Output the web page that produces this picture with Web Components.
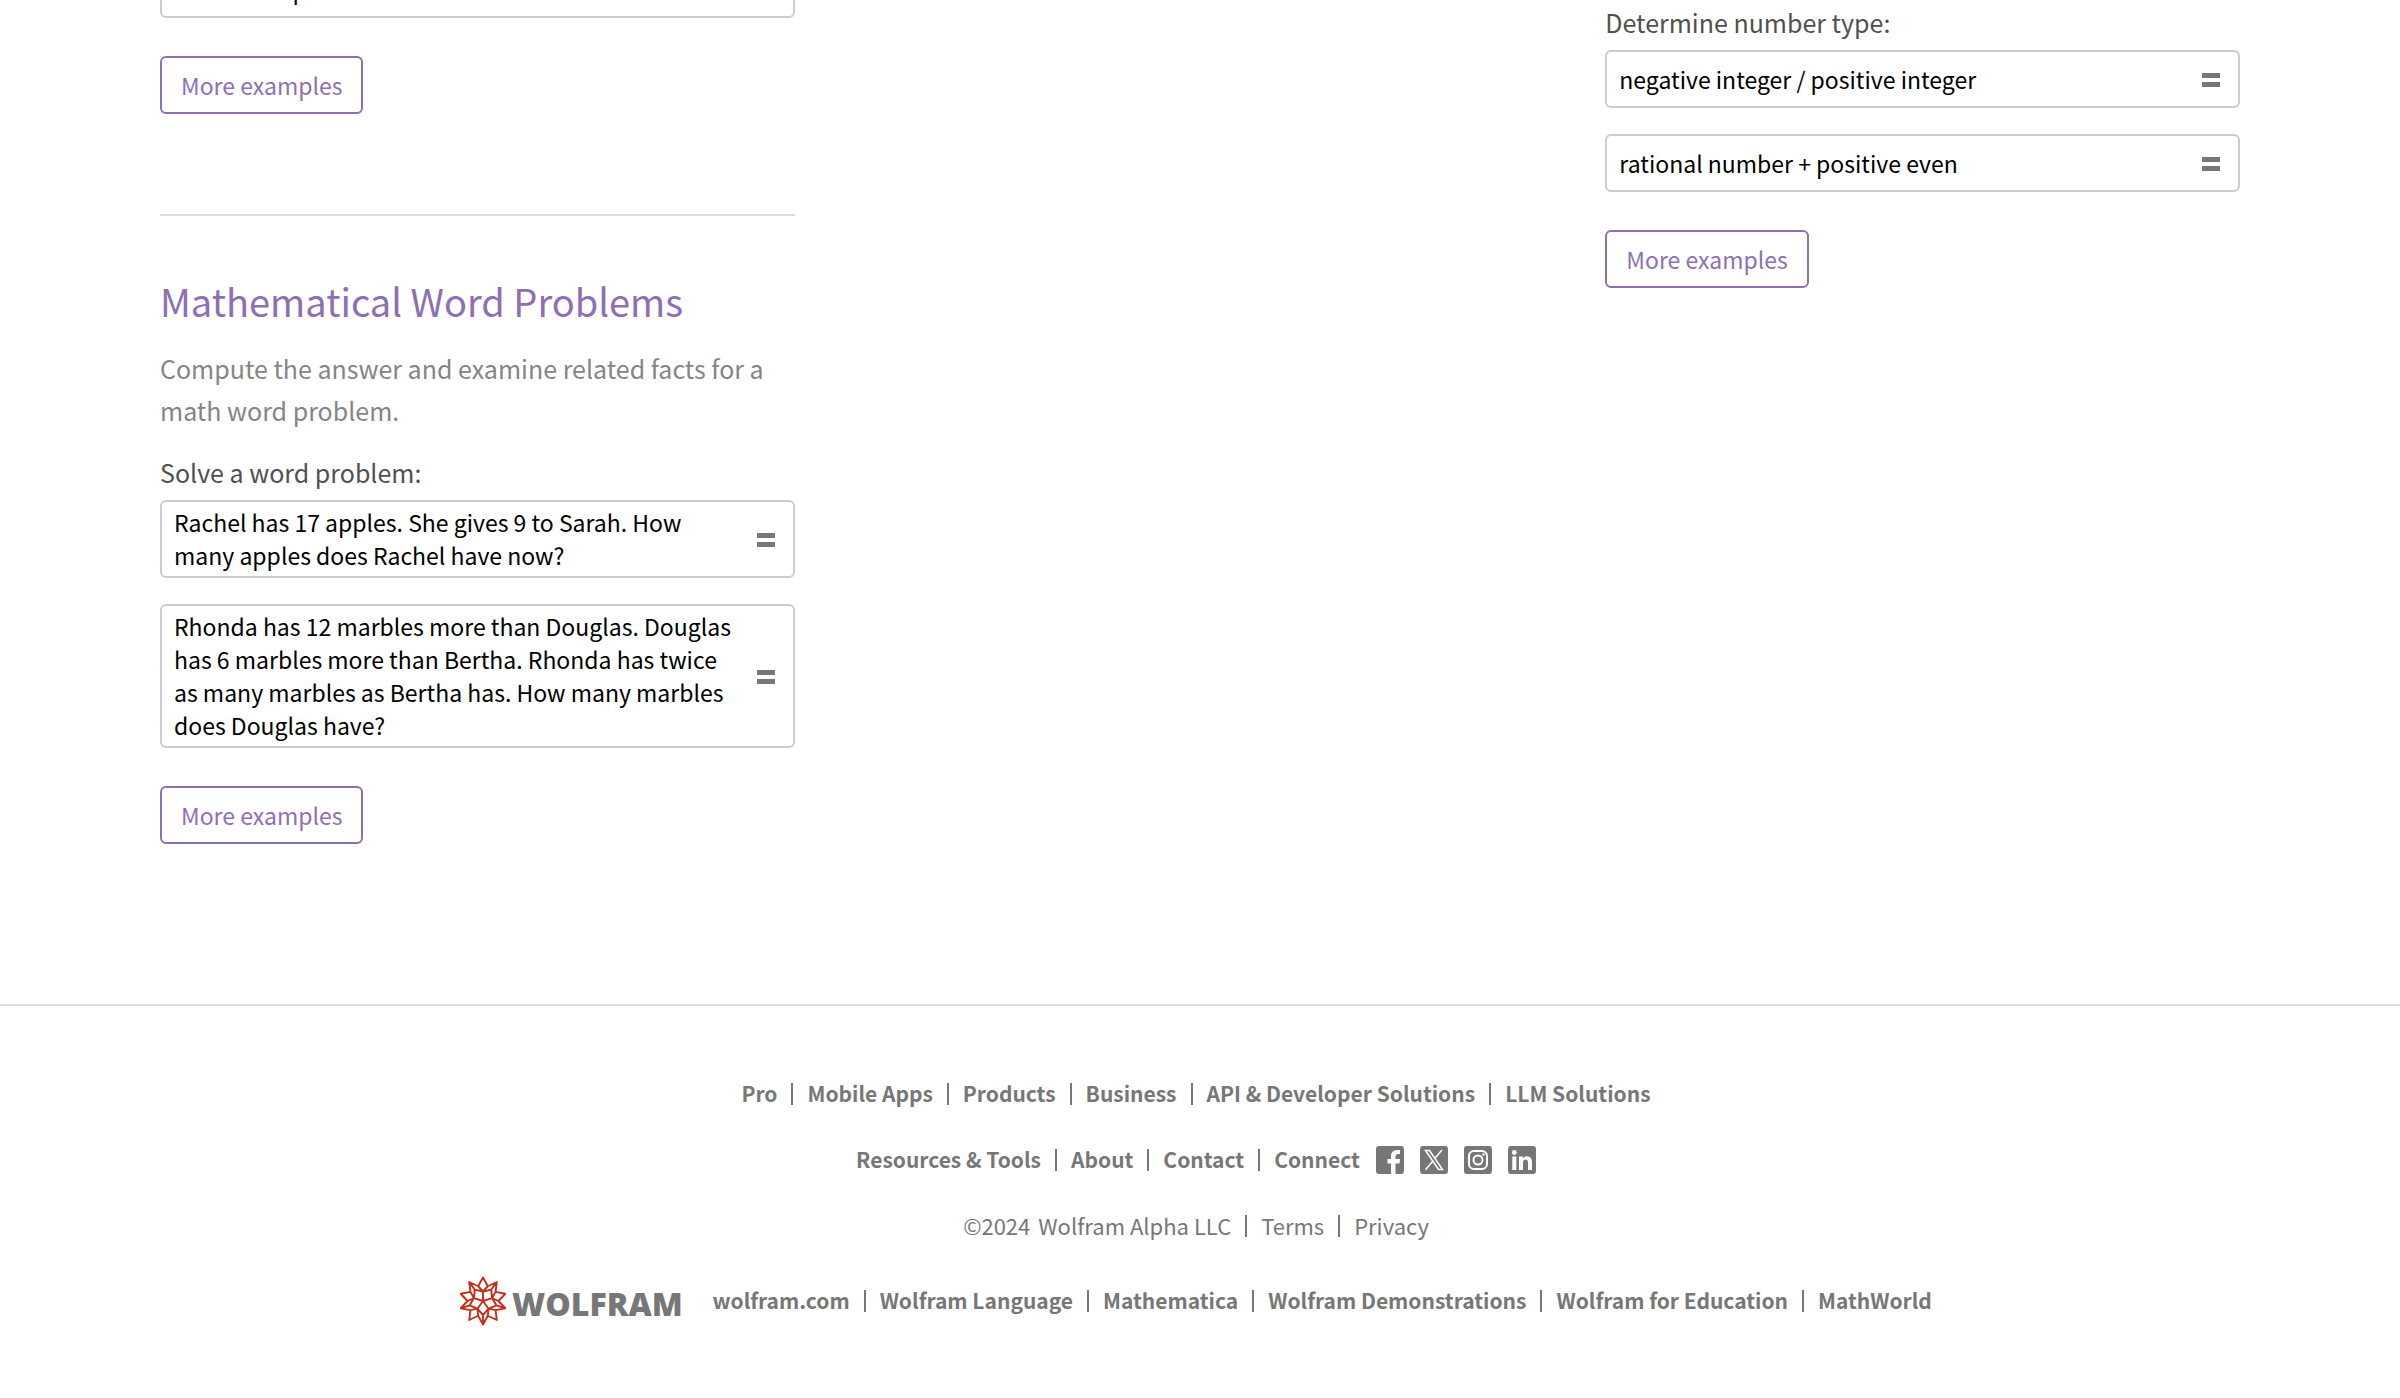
<!DOCTYPE html>
<html lang="en">
<head>
<meta charset="utf-8">
<title>Elementary Math Examples</title>
<style>
  body { margin: 0; background: #fff; font-family: "Noto Sans CJK SC", "Noto Sans", sans-serif; }
</style>
</head>
<body>
<wa-page>
  <wa-column>
    <wa-query class="first">thousands place</wa-query>
    <wa-more></wa-more>
    <wa-topic heading="Mathematical Word Problems" label="Solve a word problem:">
      <span slot="summary">Compute the answer and examine related facts for a math word problem.</span>
      <wa-query>Rachel has 17 apples. She gives 9 to Sarah. How many apples does Rachel have now?</wa-query>
      <wa-query>Rhonda has 12 marbles more than Douglas. Douglas has 6 marbles more than Bertha. Rhonda has twice as many marbles as Bertha has. How many marbles does Douglas have?</wa-query>
    </wa-topic>
    <wa-more></wa-more>
  </wa-column>
  <wa-column></wa-column>
  <wa-column>
    <wa-label>Determine number type:</wa-label>
    <wa-query>negative integer / positive integer</wa-query>
    <wa-query>rational number + positive even</wa-query>
    <wa-more></wa-more>
  </wa-column>
  <wa-footer slot="footer"></wa-footer>
</wa-page>
<script>
const define = (name, html) => customElements.define(name, class extends HTMLElement {
  constructor() {
    super();
    const t = document.createElement('template');
    t.innerHTML = html;
    this.attachShadow({ mode: 'open' }).append(t.content.cloneNode(true));
  }
  connectedCallback() {
    for (const el of this.shadowRoot.querySelectorAll('[data-attr]')) el.textContent = this.getAttribute(el.dataset.attr);
  }
});

define('wa-page', `
<style>
  :host { display: flex; flex-direction: column; min-height: 100vh; overflow: hidden; }
  main { display: grid; grid-template-columns: repeat(3, minmax(0, 1fr)); gap: 88px; padding: 0 160px; }
</style>
<main><slot></slot></main><slot name="footer"></slot>`);

define('wa-column', `
<style>
  :host { display: block; }
  ::slotted(wa-query.first) { margin-top: -40px; }
</style>
<slot></slot>`);

define('wa-label', `
<style>
  :host { display: block; padding-top: 2px; margin-bottom: 8px; color: #505050; font-size: 25px; line-height: 40px; }
</style>
<slot></slot>`);

define('wa-query', `
<style>
  :host { display: block; margin-bottom: 26px; }
  a { display: flex; align-items: center; gap: 12px; box-sizing: border-box; min-height: 58px; padding: 4px 18px 4px 12px;
      border: 2px solid #ccc; border-radius: 6px; color: #000; font-size: 23px; line-height: 33px; text-decoration: none; }
  span { flex: 1; }
  svg { flex: none; width: 18px; height: 16px; }
</style>
<a href="#"><span><slot></slot></span><svg viewBox="0 0 18 16" fill="#777" aria-hidden="true"><path d="M0 2h18v5H0zM0 11h18v5H0z"/></svg></a>`);

define('wa-more', `
<style>
  :host { display: block; margin-top: 38px; }
  button { display: block; height: 58px; padding: 0 19px; border: 2px solid #8e6fb4; border-radius: 6px; background: #fff;
      color: #9070b4; font: inherit; font-size: 23px; line-height: 54px; }
</style>
<button type="button">More examples</button>`);

define('wa-topic', `
<style>
  :host { display: block; margin-top: 100px; padding-top: 57px; border-top: 2px solid #ddd; }
  h2 { margin: 0; color: #8e6fb4; font-size: 38px; font-weight: 400; line-height: 56px; }
  p { margin: 18px 0 19px; color: #858585; font-size: 25px; line-height: 42px; }
</style>
<h2 data-attr="heading"></h2>
<p><slot name="summary"></slot></p>
<wa-label><span data-attr="label"></span></wa-label>
<slot></slot>`);

// Rhombic star seen along its five-fold axis
const polar = (r, deg) => [r * Math.cos(deg * Math.PI / 180), r * Math.sin(deg * Math.PI / 180)].map(n => n.toFixed(2)).join(' ');
let star = '';
for (let k = 0; k < 10; k++) star += `${k ? 'L' : 'M'}${polar(23.5, -90 + 36 * k)}L${polar(15.5, -72 + 36 * k)}`;
star += 'z';
for (let k = 0; k < 5; k++) {
  const a = -90 + 72 * k;
  star += `M0 0L${polar(9.5, a)}M${polar(15.5, a - 18)}L${polar(9.5, a)}L${polar(15.5, a + 18)}`;
  star += `M${polar(9.5, a)}L${polar(14, a + 36)}L${polar(9.5, a + 72)}M${polar(14, a + 36)}L${polar(23.5, a + 36)}`;
}
define('wa-spikey', `
<style>:host { display: block; } svg { display: block; width: 46px; height: 50px; }</style>
<svg viewBox="-23 -25 46 50" fill="none" stroke="#c42e1a" stroke-width="1.9" stroke-linejoin="round" aria-hidden="true"><path d="${star}"/></svg>`);

const social = (label, body) => `<a href="#" aria-label="${label}"><svg viewBox="0 0 28 28" aria-hidden="true"><rect width="28" height="28" rx="3" fill="#777"/>${body}</svg></a>`;
const links = (...names) => names.map(n => `<a class="text" href="#">${n}</a>`).join('<i></i>');

define('wa-footer', `
<style>
  :host { display: flex; flex-direction: column; align-items: center; margin-top: 160px; padding: 63px 8px 60px 0; border-top: 2px solid #ddd;
      color: #777; font-size: 21px; line-height: 48px; }
  nav { display: flex; align-items: center; height: 50px; margin-bottom: 16px; font-weight: 700; white-space: nowrap; }
  nav.legal { font-size: 22px; font-weight: 400; margin-bottom: 25px; }
  a { color: inherit; text-decoration: none; }
  .text { padding-bottom: 2px; }
  i { width: 2px; height: 22px; margin: 0 14px; background: #777; }
  .social { display: flex; gap: 16px; margin-left: 16px; }
  .social svg { display: block; width: 28px; height: 28px; }
  .year { margin-right: 8px; }
  .brand { display: flex; align-items: center; gap: 6px; margin-right: 30px; font-family: "Open Sans", sans-serif; font-size: 32px; font-weight: 800; }
  .brand span { padding-top: 6px; }
</style>
<nav>${links('Pro', 'Mobile Apps', 'Products', 'Business', 'API &amp; Developer Solutions', 'LLM Solutions')}</nav>
<nav>${links('Resources &amp; Tools', 'About', 'Contact')}<i></i><span class="text">Connect</span>
  <div class="social">
    ${social('Facebook', '<path fill="#fff" d="M15 28V17.500H11.500V13H15V10.500Q15 4 21 4H24V8H22Q19.500 8 19.500 10.500V13H24L23.500 17.500H19.500V28z"/>')}
    ${social('X', '<path fill="none" stroke="#fff" stroke-width="1.500" d="M5.500 4.500H9.500L22.500 23.500H18.500zM22 4L15.200 12M12.500 15.500L5.500 23.800"/>')}
    ${social('Instagram', '<g fill="none" stroke="#fff" stroke-width="2"><rect x="5" y="5" width="18" height="18" rx="5"/><circle cx="14" cy="14" r="4.500"/></g><circle cx="19.500" cy="8.500" r="1.200" fill="#fff"/>')}
    ${social('LinkedIn', '<g fill="#fff"><circle cx="6.300" cy="6.500" r="2.400"/><path d="M4.300 10.500h4V24h-4zM11 10.500h3.800v1.900Q16 10.200 19 10.200q5 0 5 6V24h-4v-7q0-3.400-2.400-3.400-2.600 0-2.600 3.400v7h-4z"/></g>')}
  </div>
</nav>
<nav class="legal"><span class="year text">©2024</span>${links('Wolfram Alpha LLC', 'Terms', 'Privacy')}</nav>
<nav><a class="brand" href="#"><wa-spikey></wa-spikey><span>WOLFRAM</span></a>${links('wolfram.com', 'Wolfram Language', 'Mathematica', 'Wolfram Demonstrations', 'Wolfram for Education', 'MathWorld')}</nav>`);
</script>
</body>
</html>
